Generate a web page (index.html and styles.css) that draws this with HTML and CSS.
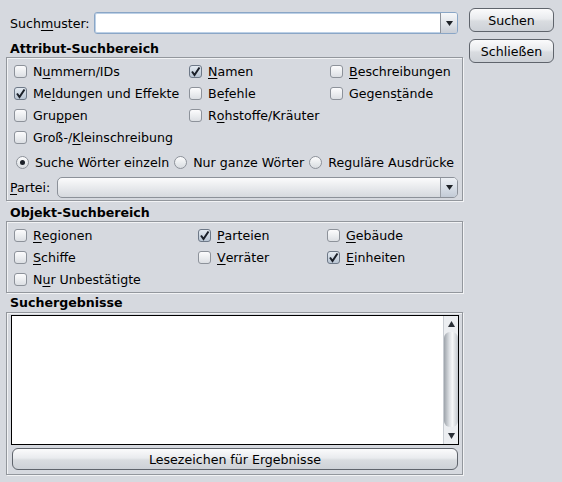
FILE: index.html
```html
<!DOCTYPE html>
<html>
<head>
<meta charset="utf-8">
<link rel="stylesheet" href="styles.css">
</head>
<body>
<div class="window">
  <div class="main">
    <div class="search-row">
      <span class="label">Such<u>m</u>uster:</span>
      <div class="combo-edit">
        <div class="field"></div>
        <div class="arrow-btn"><svg width="7" height="5" viewBox="0 0 7 5"><path d="M0 0h7L3.5 5z" fill="#1d2126"/></svg></div>
      </div>
    </div>

    <div class="title">Attribut-Suchbereich</div>
    <div class="group attr">
      <div class="grid attr-grid">
        <label class="cb"><span class="box"></span>N<u>u</u>mmern/IDs</label>
        <label class="cb"><span class="box on"><svg width="11" height="11" viewBox="0 0 11 11"><path d="M2 5.5L4.5 9L9.5 1.5" fill="none" stroke="#1a1f28" stroke-width="2"/></svg></span><u>N</u>amen</label>
        <label class="cb"><span class="box"></span><u>B</u>eschreibungen</label>
        <label class="cb"><span class="box on"><svg width="11" height="11" viewBox="0 0 11 11"><path d="M2 5.5L4.5 9L9.5 1.5" fill="none" stroke="#1a1f28" stroke-width="2"/></svg></span>Me<u>l</u>dungen und Effekte</label>
        <label class="cb"><span class="box"></span>Be<u>f</u>ehle</label>
        <label class="cb"><span class="box"></span>Gegens<u>t</u>ände</label>
        <label class="cb"><span class="box"></span>Gru<u>p</u>pen</label>
        <label class="cb"><span class="box"></span>R<u>o</u>hstoffe/Kräuter</label>
        <span></span>
        <label class="cb"><span class="box"></span>Groß-/<u>K</u>leinschreibung</label>
      </div>
      <div class="radio-row">
        <label class="rb"><span class="circle on"></span>Suche Wörter einzeln</label>
        <label class="rb"><span class="circle"></span>Nur ganze Wörter</label>
        <label class="rb"><span class="circle"></span>Reguläre Ausdrücke</label>
      </div>
      <div class="party-row">
        <span class="label"><u>P</u>artei:</span>
        <div class="combo-btn">
          <div class="combo-face"></div>
          <div class="combo-arrow"><svg width="7" height="5" viewBox="0 0 7 5"><path d="M0 0h7L3.5 5z" fill="#1d2126"/></svg></div>
        </div>
      </div>
    </div>

    <div class="title title-obj">Objekt-Suchbereich</div>
    <div class="group obj">
      <div class="grid obj-grid">
        <label class="cb"><span class="box"></span><u>R</u>egionen</label>
        <label class="cb"><span class="box on"><svg width="11" height="11" viewBox="0 0 11 11"><path d="M2 5.5L4.5 9L9.5 1.5" fill="none" stroke="#1a1f28" stroke-width="2"/></svg></span><u>P</u>arteien</label>
        <label class="cb"><span class="box"></span><u>G</u>ebäude</label>
        <label class="cb"><span class="box"></span><u>S</u>chiffe</label>
        <label class="cb"><span class="box"></span><u>V</u>erräter</label>
        <label class="cb"><span class="box on"><svg width="11" height="11" viewBox="0 0 11 11"><path d="M2 5.5L4.5 9L9.5 1.5" fill="none" stroke="#1a1f28" stroke-width="2"/></svg></span><u>E</u>inheiten</label>
        <label class="cb"><span class="box"></span>N<u>u</u>r Unbestätigte</label>
      </div>
    </div>

    <div class="title title-res">Suchergebnisse</div>
    <div class="group res">
      <div class="list">
        <div class="list-body"></div>
        <div class="scrollbar">
          <div class="sb-btn"><svg width="7" height="6" viewBox="0 0 7 6"><path d="M0 6h7L3.5 0z" fill="#2a2f36"/></svg></div>
          <div class="sb-thumb"></div>
          <div class="sb-btn"><svg width="7" height="6" viewBox="0 0 7 6"><path d="M0 0h7L3.5 6z" fill="#2a2f36"/></svg></div>
        </div>
      </div>
      <div class="btn wide">Lesezeichen für Ergebnisse</div>
    </div>
  </div>

  <div class="side">
    <div class="btn side-btn">Suchen</div>
    <div class="btn side-btn">Schließen</div>
  </div>
</div>
</body>
</html>
```

FILE: styles.css
```css
html, body {
  margin: 0;
  padding: 0;
  background: #d6d9df;
}
body {
  font-family: "DejaVu Sans", sans-serif;
  font-size: 12.6px;
  color: #000;
  width: 562px;
  height: 482px;
  overflow: hidden;
}
u { text-decoration: underline; text-underline-offset: 2px; }

.window {
  display: flex;
  padding: 8px 0 0 6px;
  gap: 6px;
}
.main {
  width: 457px;
  display: flex;
  flex-direction: column;
  padding-top: 4px;
}
.side {
  width: 85px;
  display: flex;
  flex-direction: column;
  gap: 7px;
}

.search-row {
  display: flex;
  align-items: center;
  height: 22px;
  padding-left: 4px;
}
.search-row .label { width: 84px; }

.combo-edit {
  flex: 0 0 364px;
  height: 22px;
  display: flex;
  box-sizing: border-box;
  border: 1px solid #8aa6c6;
  border-radius: 3px;
  box-shadow: inset 0 0 0 1px #bcd0e6;
  background: #fff;
  overflow: hidden;
}
.combo-edit .field { flex: 1; }
.arrow-btn {
  width: 16px;
  display: flex;
  align-items: center;
  justify-content: center;
  border-left: 1px solid #8e939b;
  background: linear-gradient(#f6f7f9, #dfe3e8 55%, #c9ced6);
}

.title {
  font-weight: bold;
  line-height: 15px;
  margin: 7px 0 1px 4px;
}
.title-obj { margin-top: 4px; }
.title-res { margin-top: 2px; margin-bottom: 2px; }

.group {
  box-sizing: border-box;
  width: 457px;
  border: 1px solid #93979d;
  box-shadow: 1px 1px 0 #f2f3f5, inset 1px 1px 0 #f2f3f5;
}
.attr { padding: 2px 0 2px 0; }
.obj { padding: 2px 0 2px 0; }
.res { padding: 2px 3px 4px 4px; }

.grid {
  display: grid;
  grid-auto-rows: 22px;
  padding-left: 7px;
}
.attr-grid { grid-template-columns: 175px 141px auto; }
.obj-grid { grid-template-columns: 184px 129px auto; }

.cb, .rb {
  display: flex;
  align-items: center;
  white-space: nowrap;
}
.box {
  width: 13px;
  height: 13px;
  box-sizing: border-box;
  border: 1px solid #8d929a;
  border-radius: 3px;
  background: linear-gradient(#fcfcfd, #e9ebee 60%, #dcdfe3);
  margin-right: 6px;
  display: flex;
  align-items: center;
  justify-content: center;
  flex: none;
}
.box.on {
  border-color: #6d7887;
  background: linear-gradient(#e4eaf1, #c9d3df 60%, #b9c5d3);
}
.box svg { display: block; }

.radio-row {
  display: flex;
  height: 23px;
  margin-top: 3px;
  padding-left: 9px;
  gap: 5px;
}
.circle {
  width: 13px;
  height: 13px;
  box-sizing: border-box;
  border: 1px solid #8d929a;
  border-radius: 50%;
  background: linear-gradient(#fcfcfd, #e6e9ec 60%, #d9dce1);
  margin-right: 6px;
  display: flex;
  align-items: center;
  justify-content: center;
  flex: none;
}
.circle.on::after {
  content: "";
  width: 5px;
  height: 5px;
  border-radius: 50%;
  background: #1c2129;
}

.party-row {
  display: flex;
  align-items: center;
  height: 21px;
  margin-top: 3px;
  padding-left: 3px;
}
.party-row .label { width: 47px; }
.combo-btn {
  flex: 0 0 401px;
  height: 21px;
  box-sizing: border-box;
  border: 1px solid #8c9199;
  border-radius: 5px;
  display: flex;
  overflow: hidden;
  background: linear-gradient(#fbfbfc, #e8eaed 50%, #d6d9de);
}
.combo-face { flex: 1; }
.combo-arrow {
  width: 16px;
  display: flex;
  align-items: center;
  justify-content: center;
  border-left: 1px solid #9a9fa7;
  background: linear-gradient(#eef1f5, #d4dbe4 60%, #c3cbd6);
}

.list {
  height: 130px;
  box-sizing: border-box;
  border: 1px solid #000;
  background: #fff;
  display: flex;
  width: 448px;
}
.list-body { flex: 1; }
.scrollbar {
  width: 14px;
  display: flex;
  flex-direction: column;
  border-left: 1px solid #c9cdd3;
  background: #eceef1;
}
.sb-btn {
  height: 16px;
  display: flex;
  align-items: center;
  justify-content: center;
  flex: none;
}
.sb-thumb {
  flex: 1;
  margin: 0 0 1px 0;
  border-radius: 6px;
  background: linear-gradient(90deg, #9ea4ab, #dfe2e6 40%, #f6f7f8 60%, #c2c7cd);
}

.btn {
  box-sizing: border-box;
  border: 1px solid #5f646c;
  border-radius: 6px;
  background: linear-gradient(#fbfbfc, #e9ebee 45%, #d9dce0 55%, #cdd1d7);
  display: flex;
  align-items: center;
  justify-content: center;
  white-space: nowrap;
}
.side-btn { height: 24px; }
.wide {
  height: 22px;
  margin: 3px 1px 0 1px;
}
```
